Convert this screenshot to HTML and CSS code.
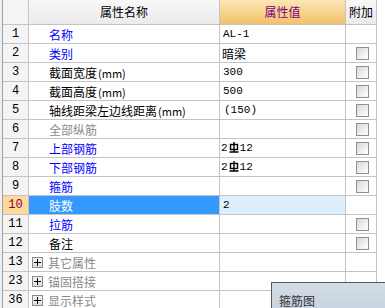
FILE: index.html
```html
<!DOCTYPE html>
<html>
<head>
<meta charset="utf-8">
<link rel="stylesheet" href="styles.css">
</head>
<body>
<div class="page">
  <div class="strip"></div>
  <div class="grid">
    <div class="hd num"></div><div class="hd">属性名称</div><div class="hd val">属性值</div><div class="hd">附加</div>

    <div class="num">1</div><div class="name blue">名称</div><div class="v">AL-1</div><div class="ck"></div>
    <div class="num">2</div><div class="name blue">类别</div><div class="v cjk">暗梁</div><div class="ck"><span class="box"></span></div>
    <div class="num">3</div><div class="name">截面宽度<span class="mm">(mm)</span></div><div class="v">300</div><div class="ck"><span class="box"></span></div>
    <div class="num">4</div><div class="name">截面高度<span class="mm">(mm)</span></div><div class="v">500</div><div class="ck"><span class="box"></span></div>
    <div class="num">5</div><div class="name">轴线距梁左边线距离<span class="mm">(mm)</span></div><div class="v v2">(150)</div><div class="ck"><span class="box"></span></div>
    <div class="num">6</div><div class="name gray">全部纵筋</div><div class="v"></div><div class="ck"><span class="box"></span></div>
    <div class="num">7</div><div class="name blue">上部钢筋</div><div class="v v0">2<svg class="rb" width="10" height="12" viewBox="0 0 10 12"><rect x="1.5" y="3.5" width="7" height="5" fill="none" stroke="#000" stroke-width="1.4"/><path d="M5 1V11M0.5 11H9.5" stroke="#000" stroke-width="1.4" fill="none"/></svg>12</div><div class="ck"><span class="box"></span></div>
    <div class="num">8</div><div class="name blue">下部钢筋</div><div class="v v0">2<svg class="rb" width="10" height="12" viewBox="0 0 10 12"><rect x="1.5" y="3.5" width="7" height="5" fill="none" stroke="#000" stroke-width="1.4"/><path d="M5 1V11M0.5 11H9.5" stroke="#000" stroke-width="1.4" fill="none"/></svg>12</div><div class="ck"><span class="box"></span></div>
    <div class="num">9</div><div class="name blue">箍筋</div><div class="v"></div><div class="ck"><span class="box"></span></div>
    <div class="num sel-num">10</div><div class="name sel-name">肢数</div><div class="v sel-val">2</div><div class="ck"></div>
    <div class="num">11</div><div class="name blue">拉筋</div><div class="v"></div><div class="ck"><span class="box"></span></div>
    <div class="num">12</div><div class="name">备注</div><div class="v"></div><div class="ck"><span class="box"></span></div>
    <div class="num">13</div><div class="name gray grp"><span class="plus"></span>其它属性</div><div class="v"></div><div class="ck"></div>
    <div class="num">23</div><div class="name gray grp"><span class="plus"></span>锚固搭接</div><div class="v"></div><div class="ck"></div>
    <div class="num">36</div><div class="name gray grp"><span class="plus"></span>显示样式</div><div class="v"></div><div class="ck"></div>
  </div>
  <div class="popup">箍筋图</div>
</div>
</body>
</html>
```

FILE: styles.css
```css
html, body {
  margin: 0;
  padding: 0;
  background: #ffffff;
  overflow: hidden;
}
.page {
  position: relative;
  width: 385px;
  height: 308px;
  display: flex;
  align-items: flex-start;
  overflow: hidden;
  font-family: "Noto Sans CJK SC", "Noto Sans", sans-serif;
  font-size: 12px;
  color: #000;
}
.strip {
  width: 2px;
  height: 308px;
  background: #f0f0f0;
  border-right: 1px solid #a0a0a0;
  flex: none;
}
.grid {
  display: grid;
  grid-template-columns: 25px 190px 125px 30px;
  grid-template-rows: 24px;
  grid-auto-rows: 18px;
  gap: 1px;
  background: #c4c4c4;
  border-right: 1px solid #c4c4c4;
  flex: none;
}
.grid > div {
  background: #ffffff;
  line-height: 19px;
  white-space: nowrap;
  overflow: hidden;
}
.hd {
  background: linear-gradient(#f8f8f8, #ebebeb) !important;
  line-height: 24px !important;
  text-align: center;
  font-size: 12px;
}
.hd.val {
  background: linear-gradient(#fce6b6, #f1c169) !important;
  color: #800080;
}
.num {
  background: #f4f4f4 !important;
  text-align: center;
  font-family: "Liberation Mono", monospace;
  font-size: 12px;
}
.name {
  padding-left: 20px;
}
.blue { color: #0000ff; }
.gray { color: #8a8a8a; }
.mm {
  font-size: 11px;
  margin-left: 1px;
}
.v {
  padding-left: 3px;
  font-family: "Liberation Mono", monospace;
  font-size: 11px;
}
.v.cjk {
  font-family: "Noto Sans CJK SC", sans-serif;
  font-size: 12px;
  padding-left: 2px;
}
.v.v0 { padding-left: 1px; }
.v.v2 { padding-left: 4px; }
.rb {
  vertical-align: -2px;
  margin: 0 1px;
}
.ck {
  display: flex;
  align-items: center;
  justify-content: center;
}
.box {
  display: block;
  width: 11px;
  height: 11px;
  margin-left: 2px;
  border: 1px solid #909090;
  background: linear-gradient(135deg, #d8d8d8, #f4f4f4 70%, #ffffff);
}
.sel-num {
  background: #ffd89b !important;
  color: #800040;
}
.sel-name {
  background: #3399ff !important;
  color: #ffffff;
}
.sel-val {
  background: #ddeefd !important;
}
.grp {
  padding-left: 3px;
  display: flex;
  align-items: center;
}
.plus {
  position: relative;
  display: block;
  width: 9px;
  height: 9px;
  border: 1px solid #8a8a8a;
  background: linear-gradient(#f4f4f4, #dedede);
  margin-right: 5px;
  flex: none;
}
.plus::before, .plus::after {
  content: "";
  position: absolute;
  background: #000;
}
.plus::before { left: 1px; right: 1px; top: 4px; height: 1px; }
.plus::after { top: 1px; bottom: 1px; left: 4px; width: 1px; }
.popup {
  position: absolute;
  left: 271px;
  top: 282px;
  width: 130px;
  height: 40px;
  border-top: 1px solid #5a5a5a;
  border-left: 1px solid #5a5a5a;
  background: linear-gradient(#d4dde7, #c2cfdc);
  color: #333;
  font-size: 12px;
  padding: 9px 0 0 7px;
  box-sizing: border-box;
}
```
